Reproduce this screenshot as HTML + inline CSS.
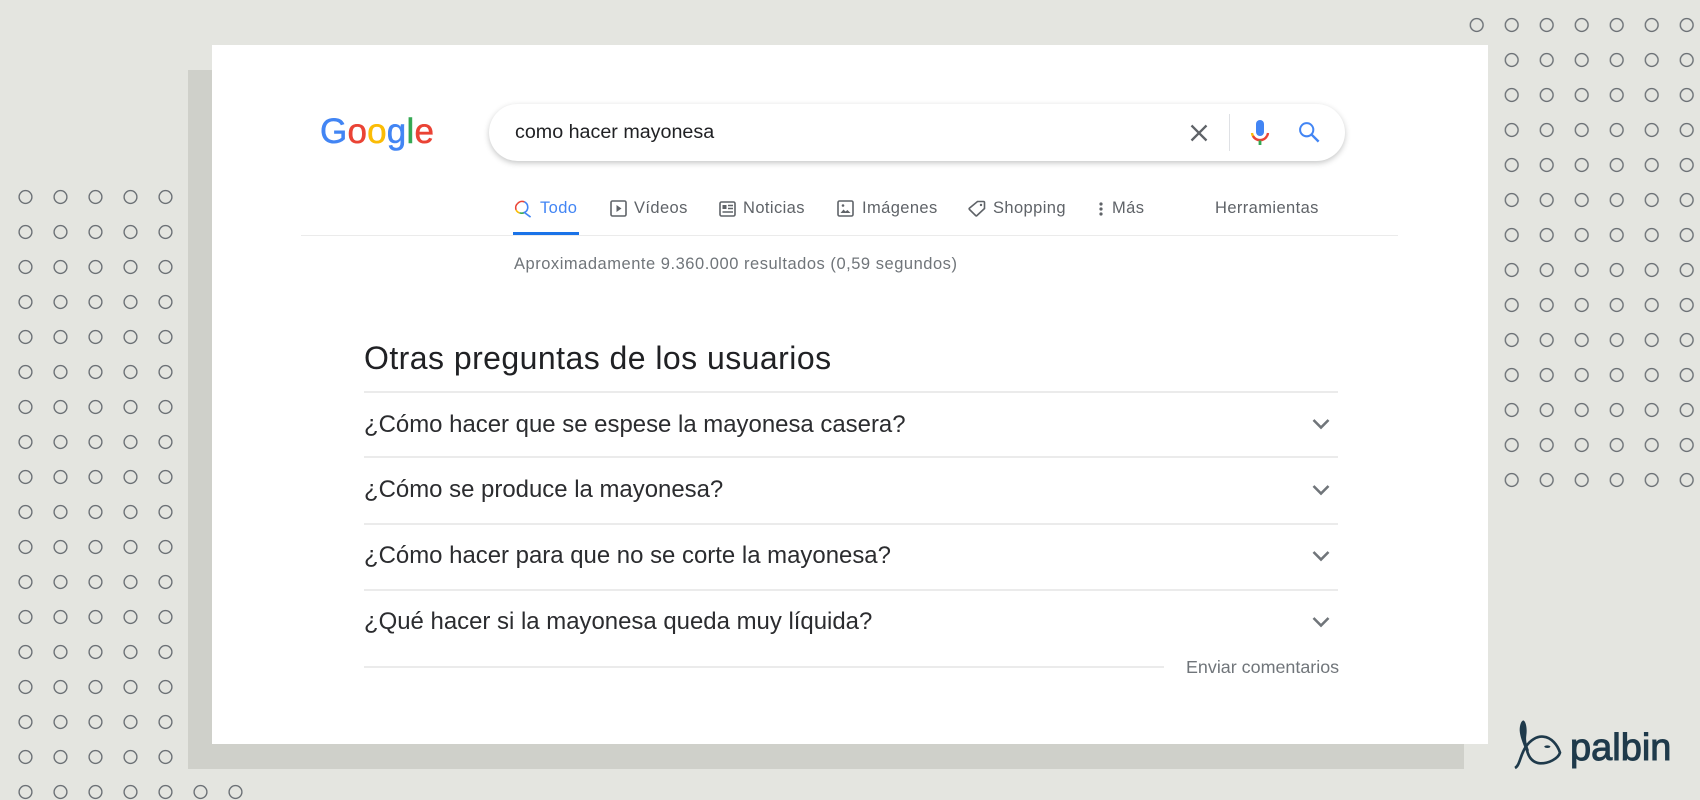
<!DOCTYPE html>
<html lang="es">
<head>
<meta charset="utf-8">
<title>Google - palbin</title>
<style>
html,body{margin:0;padding:0;width:1700px;height:800px;overflow:hidden;background:#e4e5e0}
body{position:relative;font-family:"Liberation Sans",sans-serif}
.a{position:absolute;white-space:nowrap;line-height:1;filter:blur(.3px)}
.line{position:absolute;background:#ebebeb;height:2px}
svg{position:absolute;overflow:visible}
.tab{font-size:16.5px;color:#5f6368;letter-spacing:.4px;top:200px}
.q{left:364px;font-size:23.95px;color:#2b2c2f}
</style>
</head>
<body>
<svg width="1700" height="800" style="left:0;top:0">
<defs>
<pattern id="p1" x="8" y="179.5" width="35" height="35" patternUnits="userSpaceOnUse"><circle cx="17.5" cy="17.5" r="6.4" fill="none" stroke="#6c7176" stroke-width="1.4"/></pattern>
<pattern id="p2" x="1459.2" y="7.5" width="35" height="35" patternUnits="userSpaceOnUse"><circle cx="17.5" cy="17.5" r="6.4" fill="none" stroke="#6c7176" stroke-width="1.4"/></pattern>
</defs>
<rect x="8" y="179.5" width="175" height="630" fill="url(#p1)"/>
<rect x="183" y="774.5" width="70" height="35" fill="url(#p1)"/>
<rect x="1459.2" y="7.5" width="240.8" height="35" fill="url(#p2)"/>
<rect x="1494.2" y="42.5" width="205.8" height="455" fill="url(#p2)"/>
</svg>
<div style="position:absolute;left:188px;top:70px;width:1276px;height:699px;background:#cfd0ca"></div>
<div style="position:absolute;left:212px;top:45px;width:1276px;height:699px;background:#fff"></div>

<div class="a" style="left:320px;top:113.5px;font-size:35px;letter-spacing:.2px;-webkit-text-stroke:.5px"><span style="color:#4285f4">G</span><span style="color:#ea4335">o</span><span style="color:#fbbc05">o</span><span style="color:#4285f4">g</span><span style="color:#34a853">l</span><span style="color:#ea4335">e</span></div>

<div style="position:absolute;left:489px;top:104px;width:856px;height:57px;border-radius:29px;background:#fff;box-shadow:0 2px 6px rgba(32,33,36,.26)"></div>
<div class="a" style="left:515px;top:123px;font-size:19.7px;color:#202124">como hacer mayonesa</div>
<svg style="left:1190px;top:124px" width="18" height="18" viewBox="0 0 18 18"><path d="M1.500 1.500L16.500 16.500M16.500 1.500L1.500 16.500" stroke="#5f6368" stroke-width="2.300" fill="none"/></svg>
<div style="position:absolute;left:1229px;top:114px;width:1px;height:37px;background:#dfe1e5"></div>
<svg style="left:1250px;top:119px" width="20" height="27" viewBox="0 0 20 27">
<rect x="6" y="1" width="8" height="16" rx="4" fill="#4285f4"/>
<path d="M2 14a8 8 0 0 0 4 6" stroke="#fbbc05" stroke-width="2.400" fill="none"/>
<path d="M3 17a8 8 0 0 0 14 0" stroke="#ea4335" stroke-width="2.400" fill="none"/>
<path d="M18 14a8 8 0 0 1-1 3" stroke="#ea4335" stroke-width="2.400" fill="none"/>
<rect x="8.600" y="21.500" width="2.800" height="4.500" fill="#34a853"/>
</svg>
<svg style="left:1298px;top:121px" width="22" height="22" viewBox="0 0 24 24"><circle cx="9.500" cy="9.500" r="7.200" fill="none" stroke="#4285f4" stroke-width="2.200"/><path d="M14.800 14.800L22.500 22.500" stroke="#4285f4" stroke-width="2.600" fill="none"/></svg>

<svg style="left:514px;top:200px" width="18" height="18" viewBox="0 0 19 19">
<path d="M2.200 10.500A6.200 6.200 0 0 1 4 3.500" stroke="#ea4335" stroke-width="1.700" fill="none"/>
<path d="M4 3.500A6.200 6.200 0 0 1 11 2" stroke="#ea4335" stroke-width="1.700" fill="none"/>
<path d="M2.200 10.500A6.200 6.200 0 0 0 6 13.600" stroke="#fbbc05" stroke-width="1.700" fill="none"/>
<path d="M6 13.600A6.200 6.200 0 0 0 11 13.200" stroke="#34a853" stroke-width="1.700" fill="none"/>
<path d="M11 2A6.200 6.200 0 0 1 11 13.200L17.500 18" stroke="#4285f4" stroke-width="1.700" fill="none"/>
</svg>
<div class="a tab" style="left:540px;color:#4285f4">Todo</div>
<div style="position:absolute;left:513px;top:232px;width:66px;height:4px;background:#1a73e8"></div>

<svg style="left:610px;top:200px" width="17" height="17" viewBox="0 0 17 17"><rect x="1" y="1" width="15" height="15" rx="1.500" fill="none" stroke="#5f6368" stroke-width="1.600"/><path d="M6.500 5v7l5-3.500z" fill="#5f6368"/></svg>
<div class="a tab" style="left:634px">Vídeos</div>

<svg style="left:719px;top:201px" width="17" height="16" viewBox="0 0 17 16"><rect x="1" y="1" width="15" height="14" rx="1.500" fill="none" stroke="#5f6368" stroke-width="1.600"/><rect x="3.500" y="4" width="4" height="4" fill="#5f6368"/><path d="M9 4.500h5M9 7.500h5M3.500 11h10.500" stroke="#5f6368" stroke-width="1.500"/></svg>
<div class="a tab" style="left:743px">Noticias</div>

<svg style="left:837px;top:200px" width="17" height="17" viewBox="0 0 17 17"><rect x="1" y="1" width="15" height="15" rx="1.500" fill="none" stroke="#5f6368" stroke-width="1.600"/><circle cx="6" cy="5.500" r="1.300" fill="#5f6368"/><path d="M3.500 13l3-3.500 2 2 2-1.500 3 3z" fill="#5f6368"/></svg>
<div class="a tab" style="left:862px">Imágenes</div>

<svg style="left:968px;top:200px" width="18" height="17" viewBox="0 0 18 17"><path d="M9.500 1.500h6a1 1 0 0 1 1 1v6l-7.500 7a1 1 0 0 1-1.400 0L1.500 9.500a1 1 0 0 1 0-1.400z" fill="none" stroke="#5f6368" stroke-width="1.600"/><circle cx="13" cy="5" r="1.200" fill="#5f6368"/></svg>
<div class="a tab" style="left:993px">Shopping</div>

<svg style="left:1099px;top:202px" width="4" height="14" viewBox="0 0 4 14"><circle cx="2" cy="2" r="1.600" fill="#5f6368"/><circle cx="2" cy="7" r="1.600" fill="#5f6368"/><circle cx="2" cy="12" r="1.600" fill="#5f6368"/></svg>
<div class="a tab" style="left:1112px">Más</div>
<div class="a tab" style="left:1215px">Herramientas</div>

<div class="line" style="left:301px;top:235px;width:1097px;height:1px"></div>
<div class="a" style="left:514px;top:256px;font-size:16.5px;color:#70757a;letter-spacing:.52px">Aproximadamente 9.360.000 resultados (0,59 segundos)</div>

<div class="a" style="left:364px;top:342px;font-size:32px;color:#202124;letter-spacing:.45px">Otras preguntas de los usuarios</div>
<div class="line" style="left:364px;top:391px;width:974px"></div>
<div class="a q" style="top:413px">¿Cómo hacer que se espese la mayonesa casera?</div>
<div class="line" style="left:364px;top:456px;width:974px"></div>
<div class="a q" style="top:478px">¿Cómo se produce la mayonesa?</div>
<div class="line" style="left:364px;top:523px;width:974px"></div>
<div class="a q" style="top:544px">¿Cómo hacer para que no se corte la mayonesa?</div>
<div class="line" style="left:364px;top:589px;width:974px"></div>
<div class="a q" style="top:610px">¿Qué hacer si la mayonesa queda muy líquida?</div>

<svg style="left:1312px;top:418px" width="18" height="12" viewBox="0 0 18 12"><path d="M1.500 2L9 9.500 16.500 2" fill="none" stroke="#70757a" stroke-width="2.600"/></svg>
<svg style="left:1312px;top:484px" width="18" height="12" viewBox="0 0 18 12"><path d="M1.500 2L9 9.500 16.500 2" fill="none" stroke="#70757a" stroke-width="2.600"/></svg>
<svg style="left:1312px;top:550px" width="18" height="12" viewBox="0 0 18 12"><path d="M1.500 2L9 9.500 16.500 2" fill="none" stroke="#70757a" stroke-width="2.600"/></svg>
<svg style="left:1312px;top:616px" width="18" height="12" viewBox="0 0 18 12"><path d="M1.500 2L9 9.500 16.500 2" fill="none" stroke="#70757a" stroke-width="2.600"/></svg>

<div class="line" style="left:364px;top:666px;width:800px"></div>
<div class="a" style="left:1186px;top:659px;font-size:17.900px;color:#70757a">Enviar comentarios</div>

<svg style="left:1505px;top:712px" width="90" height="60" viewBox="0 0 270 180">
<path d="M55 25C63 28 67 50 64 70C62 85 64 95 72 115L64 120C56 100 45 75 44 55C44 40 48 27 55 25Z" fill="#1f3a4b"/>
<path d="M30 168C45 160 45 130 62 105C75 85 95 72 115 74C140 76 158 100 165 122C160 140 130 155 105 154C85 152 72 140 66 115" fill="none" stroke="#1f3a4b" stroke-width="8"/>
<ellipse cx="127" cy="104" rx="9" ry="4" fill="#1f3a4b"/>
</svg>
<div class="a" style="left:1570px;top:729px;font-size:38px;color:#1f3a4b;-webkit-text-stroke:1px #1f3a4b">palbin</div>
</body>
</html>
